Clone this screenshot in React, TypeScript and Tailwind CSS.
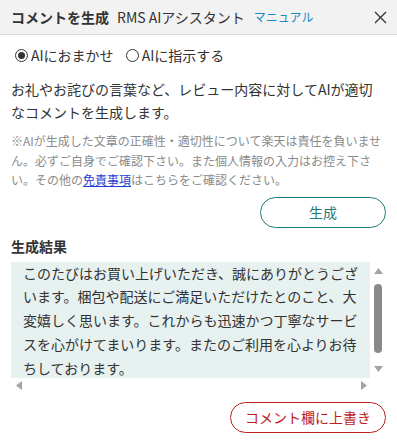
import React from "react";

const font = { fontFamily: '"Noto Sans CJK JP", "Noto Sans", sans-serif' };

function Radio({ checked }: { checked: boolean }) {
  return (
    <span className="relative inline-flex h-[13px] w-[13px] items-center justify-center rounded-full border border-[#333] bg-white">
      {checked && <span className="h-[7px] w-[7px] rounded-full bg-[#333]" />}
    </span>
  );
}

export default function App() {
  return (
    <div className="h-[446px] w-[397px] overflow-hidden bg-white text-[#333]" style={font}>
      <div className="flex h-[35px] items-center border-b border-[#dadada] bg-[#f2f2f2] pl-[11px] pr-[10px]">
        <span className="text-[14px] font-bold leading-none text-[#333]">コメントを生成</span>
        <span className="ml-[8px] text-[14px] leading-none text-[#333]">RMS AIアシスタント</span>
        <span className="ml-[9px] text-[12px] leading-none text-[#1a8ac6]">マニュアル</span>
        <span className="ml-auto flex h-[14px] w-[14px] items-center justify-center">
          <svg width="13" height="13" viewBox="0 0 13 13" fill="none" stroke="#333" strokeWidth="1.3">
            <path d="M1 1L12 12M12 1L1 12" />
          </svg>
        </span>
      </div>

      <div className="px-[11px]">
        <div className="mt-[12px] flex h-[16px] items-center pl-[4px] text-[14px]">
          <label className="flex items-center gap-[3px]">
            <Radio checked />
            <span className="leading-none">AIにおまかせ</span>
          </label>
          <label className="ml-[12px] flex items-center gap-[3px]">
            <Radio checked={false} />
            <span className="leading-none">AIに指示する</span>
          </label>
        </div>

        <p className="mt-[15px] text-[14px] leading-[23px] text-[#333]">
          お礼やお詫びの言葉など、レビュー内容に対してAIが適切なコメントを生成します。
        </p>

        <p className="mt-[7px] text-[12px] leading-[19.5px] text-[#8a8a8a]">
          ※AIが生成した文章の正確性・適切性について楽天は責任を負いません。必ずご自身でご確認下さい。また個人情報の入力はお控え下さい。その他の
          <span className="text-[#1d3fd8] underline">免責事項</span>
          はこちらをご確認ください。
        </p>

        <div className="mt-[7px] flex justify-end">
          <button className="flex h-[31px] w-[126px] items-center justify-center rounded-full border-[1.5px] border-[#1e7b7d] bg-white text-[14px] text-[#1e7b7d]">
            生成
          </button>
        </div>

        <div className="mt-[8px] text-[14px] font-bold leading-[20px] text-[#333]">生成結果</div>

        <div className="mt-[6px]">
          <div className="flex">
            <div className="h-[116px] w-[362px] overflow-hidden bg-[#e6f1f0] px-[12px] text-[14px] leading-[23.8px] text-[#333]">
              このたびはお買い上げいただき、誠にありがとうございます。梱包や配送にご満足いただけたとのこと、大変嬉しく思います。これからも迅速かつ丁寧なサービスを心がけてまいります。またのご利用を心よりお待ちしております。
            </div>
            <div className="flex w-[16px] flex-col items-center">
              <svg width="9" height="6" viewBox="0 0 9 6" className="mt-[6px]">
                <path d="M4.5 0L9 6H0Z" fill="#a3a3a3" />
              </svg>
              <div className="mt-[10px] h-[69px] w-[8px] rounded-full bg-[#8a8a8a]" />
              <svg width="9" height="6" viewBox="0 0 9 6" className="mt-auto mb-[6px]">
                <path d="M0 0H9L4.5 6Z" fill="#a3a3a3" />
              </svg>
            </div>
          </div>
          <div className="flex h-[15px] w-[362px] items-center justify-between pl-[5px] pr-[6px]">
            <svg width="6" height="9" viewBox="0 0 6 9">
              <path d="M6 0V9L0 4.5Z" fill="#a3a3a3" />
            </svg>
            <svg width="6" height="9" viewBox="0 0 6 9">
              <path d="M0 0L6 4.5L0 9Z" fill="#a3a3a3" />
            </svg>
          </div>
        </div>

        <div className="mt-[9px] flex justify-end">
          <button className="flex h-[31px] w-[156px] items-center justify-center rounded-full border-[1.5px] border-[#bf1e1e] bg-white text-[14px] text-[#bf1e1e]">
            コメント欄に上書き
          </button>
        </div>
      </div>
    </div>
  );
}
